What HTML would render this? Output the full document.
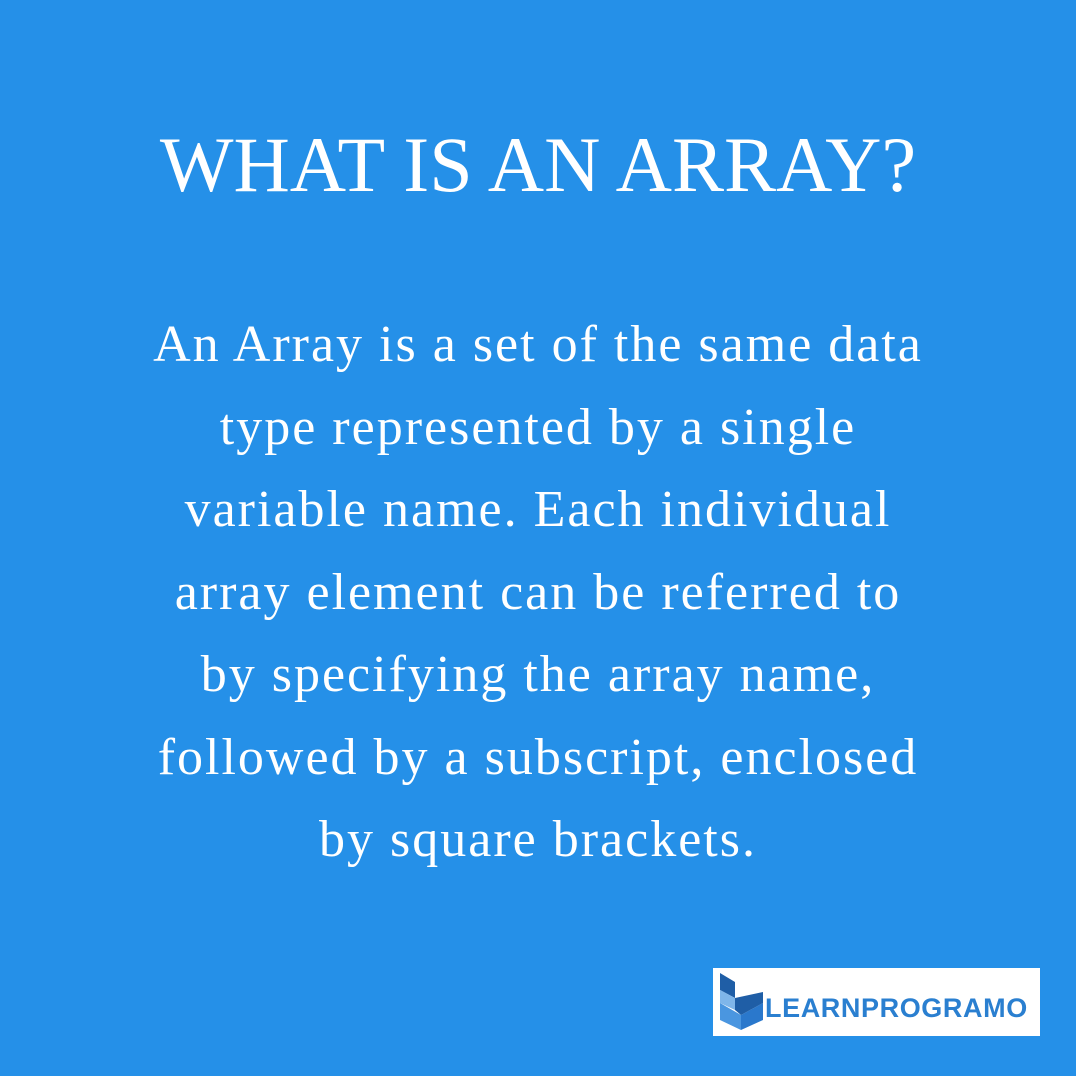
<!DOCTYPE html>
<html><head><meta charset="utf-8"><style>
html,body{margin:0;padding:0}
body{width:1076px;height:1076px;background:#2590e8;position:relative;overflow:hidden;font-family:"Liberation Serif",serif;color:#fff}
.t{position:absolute;left:0;width:1076px;top:115px;text-align:center;font-size:78px;line-height:100px;white-space:nowrap}
.b{position:absolute;left:0;width:1076px;top:304px;text-align:center;font-size:52px;letter-spacing:2px;line-height:82.5px;white-space:nowrap}
.logo{position:absolute;left:713px;top:968px;width:327px;height:68px;background:#fff}
.lt{position:absolute;left:52px;top:27px;line-height:27px;font-family:"Liberation Sans",sans-serif;font-weight:bold;font-size:27px;color:#2a7fd0;letter-spacing:0.6px}
</style></head><body>
<div class="t">WHAT IS AN ARRAY?</div>
<div class="b">An Array is a set of the same data<br>type represented by a single<br>variable name. Each individual<br>array element can be referred to<br>by specifying the array name,<br>followed by a subscript, enclosed<br>by square brackets.</div>
<div class="logo">
<svg width="60" height="68" style="position:absolute;left:0;top:0">
<polygon points="7,5 22,14 22,30 7,22" fill="#1f5ea6"/>
<polygon points="7,22 22,30 22,42 7,35" fill="#7fb6ea"/>
<polygon points="7,35 28,47 28,62 7,52" fill="#4a96e0"/>
<polygon points="28,47 50,35 50,52 28,62" fill="#2a78cc"/>
<polygon points="22,30 22,42 28,47 50,35 50,24" fill="#1f5ea6"/>
</svg>
<div class="lt">LEARNPROGRAMO</div>
</div>
</body></html>
